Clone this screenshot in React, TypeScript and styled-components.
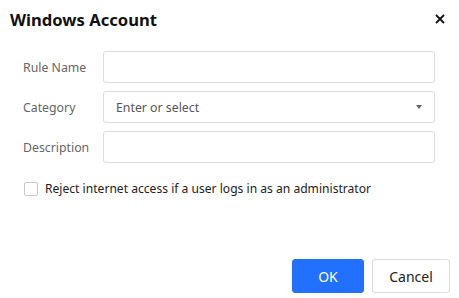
import React from 'react';
import styled, { createGlobalStyle } from 'styled-components';

const GlobalStyle = createGlobalStyle`
  html, body {
    margin: 0;
    padding: 0;
    background: #ffffff;
  }
  body {
    font-family: 'Noto Sans', 'Open Sans', Arial, sans-serif;
    color: #333;
  }
`;

const Dialog = styled.div`
  width: 459px;
  height: 298px;
  box-sizing: border-box;
  display: flex;
  flex-direction: column;
  background: #fff;
`;

const Header = styled.div`
  display: flex;
  align-items: center;
  justify-content: space-between;
  height: 38px;
  padding: 0 12px 0 10px;
`;

const Title = styled.h2`
  margin: 0;
  font-size: 16.6px;
  font-weight: 700;
  color: #111;
`;

const CloseButton = styled.button`
  width: 14px;
  height: 14px;
  padding: 0;
  border: none;
  background: none;
  display: flex;
  align-items: center;
  justify-content: center;
  cursor: pointer;
`;

const Body = styled.div`
  flex: 1;
  display: flex;
  flex-direction: column;
  gap: 8px;
  padding: 13px 24px 0 23px;
`;

const Row = styled.div`
  display: flex;
  align-items: center;
`;

const Label = styled.label`
  width: 80px;
  font-size: 12.3px;
  color: #666;
`;

const Field = styled.div`
  position: relative;
  width: 332px;
  height: 32px;
  box-sizing: border-box;
  border: 1px solid #dcdcdc;
  border-radius: 3px;
  display: flex;
  align-items: center;
  padding: 0 12px;
`;

const Placeholder = styled.span`
  font-size: 12.3px;
  color: #555;
`;

const Caret = styled.span`
  position: absolute;
  right: 12px;
  top: 13px;
  width: 0;
  height: 0;
  border-left: 3.5px solid transparent;
  border-right: 3.5px solid transparent;
  border-top: 4px solid #666;
`;

const CheckRow = styled.label`
  display: flex;
  align-items: center;
  gap: 7px;
  margin-top: 9px;
  padding-left: 1px;
  font-size: 12.1px;
  color: #222;
`;

const Box = styled.span`
  width: 14px;
  height: 14px;
  box-sizing: border-box;
  border: 1px solid #c8c8c8;
  border-radius: 2px;
`;

const Footer = styled.div`
  display: flex;
  justify-content: flex-end;
  gap: 8px;
  padding: 0 9px 5px 0;
`;

const Button = styled.button<{ $primary?: boolean }>`
  height: 34px;
  min-width: ${(p) => (p.$primary ? '72px' : '78px')};
  box-sizing: border-box;
  border-radius: 3px;
  border: 1px solid ${(p) => (p.$primary ? '#2170ff' : '#dcdcdc')};
  background: ${(p) => (p.$primary ? '#2170ff' : '#fff')};
  color: ${(p) => (p.$primary ? '#fff' : '#222')};
  font-family: inherit;
  font-size: 14px;
  cursor: pointer;
`;

export default function App() {
  return (
    <>
      <GlobalStyle />
      <Dialog>
        <Header>
          <Title>Windows Account</Title>
          <CloseButton aria-label="Close">
            <svg width="10" height="10" viewBox="0 0 10 10">
              <path d="M1 1 L9 9 M9 1 L1 9" stroke="#111" strokeWidth="1.8" />
            </svg>
          </CloseButton>
        </Header>
        <Body>
          <Row>
            <Label>Rule Name</Label>
            <Field />
          </Row>
          <Row>
            <Label>Category</Label>
            <Field>
              <Placeholder>Enter or select</Placeholder>
              <Caret />
            </Field>
          </Row>
          <Row>
            <Label>Description</Label>
            <Field />
          </Row>
          <CheckRow>
            <Box />
            Reject internet access if a user logs in as an administrator
          </CheckRow>
        </Body>
        <Footer>
          <Button $primary>OK</Button>
          <Button>Cancel</Button>
        </Footer>
      </Dialog>
    </>
  );
}
